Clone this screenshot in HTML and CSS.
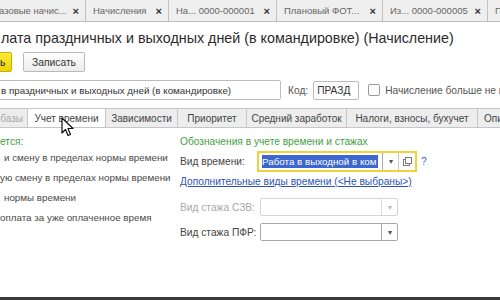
FILE: index.html
```html
<!DOCTYPE html>
<html lang="ru">
<head>
<meta charset="utf-8">
<title>Начисление</title>
<link rel="stylesheet" href="styles.css">
</head>
<body>
<div class="winbar">
  <div class="wtab w1"><span>азовые начис...</span><span class="x">×</span></div>
  <div class="wtab w2"><span>Начисления</span><span class="x">×</span></div>
  <div class="wtab w3"><span>На... 0000-000001</span><span class="x">×</span></div>
  <div class="wtab w4"><span>Плановый ФОТ...</span><span class="x">×</span></div>
  <div class="wtab w5"><span>Из... 0000-000005</span><span class="x">×</span></div>
  <div class="wtab w6"><span>П</span></div>
</div>

<h1 class="title">лата праздничных и выходных дней (в командировке) (Начисление)</h1>

<div class="toolbar">
  <div class="btn btn-yellow">ь</div>
  <div class="btn">Записать</div>
</div>

<div class="namerow">
  <div class="field name">в праздничных и выходных дней (в командировке)</div>
  <span class="lbl code-lbl">Код:</span>
  <div class="field code">ПРАЗД</div>
  <span class="check"></span>
  <span class="lbl">Начисление больше не ис</span>
</div>

<div class="ftabs">
  <div class="ftab t0 faded">базы</div>
  <div class="ftab t1 active">Учет времени</div>
  <div class="ftab t2">Зависимости</div>
  <div class="ftab t3">Приоритет</div>
  <div class="ftab t4">Средний заработок</div>
  <div class="ftab t5">Налоги, взносы, бухучет</div>
  <div class="ftab t6">Опи</div>
</div>

<div class="content">
  <div class="col-left">
    <div class="group">ется:</div>
    <div class="item i1">и смену в пределах нормы времени</div>
    <div class="item">ую смену в пределах нормы времени</div>
    <div class="item i1">нормы времени</div>
    <div class="item">оплата за уже оплаченное время</div>
  </div>
  <div class="col-right">
    <div class="group">Обозначения в учете времени и стажах</div>
    <div class="row r-time">
      <span class="rlbl lbl-time">Вид времени:</span>
      <div class="focus">
        <div class="ftext"><span class="sel">Работа в выходной в ком</span></div>
        <div class="dd">▾</div>
        <div class="open">
          <svg width="9" height="9" viewBox="0 0 9 9"><rect x="0.5" y="2.5" width="6" height="6" fill="#fff" stroke="#777"/><rect x="2.5" y="0.5" width="6" height="6" fill="#fff" stroke="#777"/></svg>
        </div>
      </div>
      <span class="help">?</span>
    </div>
    <div class="link">Дополнительные виды времени (&lt;Не выбраны&gt;)</div>
    <div class="row r-szv">
      <span class="rlbl disabled">Вид стажа СЗВ:</span>
      <div class="sel-field dis"><div class="ftext"></div><div class="dd">▾</div></div>
    </div>
    <div class="row r-pfr">
      <span class="rlbl">Вид стажа ПФР:</span>
      <div class="sel-field"><div class="ftext"></div><div class="dd">▾</div></div>
    </div>
  </div>
</div>

<div class="spacer"></div>
<div class="bottom"></div>

<svg class="cursor" width="13" height="20" viewBox="0 0 13 20"><path d="M1 1 L1 16 L4.5 12.5 L7 18.5 L9.5 17.5 L7 11.5 L12 11.5 Z" fill="#fff" stroke="#111" stroke-width="1.2" stroke-linejoin="round"/></svg>
</body>
</html>
```

FILE: styles.css
```css
* { box-sizing: border-box; }
html, body { margin: 0; padding: 0; }
body {
  width: 500px;
  height: 300px;
  overflow: hidden;
  background: #fff;
  font-family: "Liberation Sans", Arial, sans-serif;
  color: #444;
  display: flex;
  flex-direction: column;
  position: relative;
}

/* window tabs */
.winbar {
  height: 22px;
  flex: none;
  display: flex;
  background: #e6e6e6;
  border-bottom: 1px solid #bdbdbd;
  overflow: hidden;
}
.wtab {
  flex: none;
  display: flex;
  align-items: center;
  justify-content: space-between;
  padding: 0 6px 0 7px;
  font-size: 9.5px;
  color: #666;
  background: #efefef;
  border-right: 1px solid #c2c2c2;
  white-space: nowrap;
  overflow: hidden;
}
.wtab .x { color: #333; font-size: 11px; font-weight: bold; }
.w1 { width: 87px; padding-left: 0; margin-left: -1px; }
.w2 { width: 83px; }
.w3 { width: 108px; }
.w4 { width: 106px; }
.w5 { width: 105px; }
.w6 { width: 30px; border-right: none; }

/* title */
.title {
  margin: 7px 0 0 1px;
  font-size: 14.3px;
  line-height: 18px;
  font-weight: normal;
  color: #2b2b2b;
  white-space: nowrap;
}

/* toolbar */
.toolbar {
  margin-top: 5px;
  height: 20px;
  display: flex;
  gap: 11px;
  flex: none;
}
.btn {
  height: 20px;
  display: flex;
  align-items: center;
  justify-content: center;
  font-size: 10.3px;
  color: #333;
  border: 1px solid #b9b9b9;
  border-radius: 2px;
  background: linear-gradient(#ffffff, #ececec);
  width: 62px;
}
.btn-yellow {
  width: 22px;
  margin-left: -10px;
  padding-left: 9px;
  justify-content: flex-start;
  background: linear-gradient(#fbe93a, #eed400);
  border-color: #c8b000;
  color: #222;
}

/* name row */
.namerow {
  margin-top: 8px;
  height: 20px;
  display: flex;
  align-items: center;
  flex: none;
  font-size: 10.2px;
  white-space: nowrap;
  overflow: hidden;
}
.field {
  height: 20px;
  border: 1px solid #bcbcbc;
  border-radius: 2px;
  display: flex;
  align-items: center;
  color: #333;
  background: #fff;
  flex: none;
}
.name { width: 286px; margin-left: -5px; padding-left: 5px; font-size: 9.8px; }
.lbl { color: #555; }
.code-lbl { margin-left: 7px; margin-right: 5px; }
.code { width: 46px; padding-left: 3px; height: 19px; }
.check {
  width: 12px; height: 12px;
  flex: none;
  border: 1px solid #9a9a9a;
  border-radius: 2px;
  margin: 0 5px 0 9px;
  background: #fff;
}

/* form tabs */
.ftabs {
  margin-top: 8px;
  height: 20px;
  display: flex;
  flex: none;
  border-bottom: 1px solid #c6c6c6;
  font-size: 10px;
  white-space: nowrap;
  overflow: hidden;
}
.ftab {
  flex: none;
  display: flex;
  align-items: center;
  justify-content: center;
  background: #ededed;
  border: 1px solid #c6c6c6;
  border-left: none;
  border-bottom: none;
  color: #444;
}
.ftab.active { background: #fff; height: 20px; }
.faded { color: #a8a8a8; }
.t0 { width: 28px; justify-content: flex-end; padding-right: 4px; }
.t1 { width: 78px; }
.t2 { width: 72px; }
.t3 { width: 69px; }
.t4 { width: 100px; }
.t5 { width: 131px; }
.t6 { width: 22px; justify-content: flex-start; padding-left: 6px; border-right: none; }

/* content */
.content {
  display: grid;
  grid-template-columns: 180px 1fr;
  flex: none;
  font-size: 10.2px;
  white-space: nowrap;
}
.col-left, .col-right { display: flex; flex-direction: column; }
.group {
  margin-top: 7px;
  line-height: 13px;
  color: #3f9f3f;
}
.item { line-height: 20px; color: #4a4a4a; font-size: 9.8px; }
.i1 { padding-left: 4px; }

.row { display: flex; align-items: center; }
.rlbl { width: 80px; flex: none; color: #444; }
.lbl-time { width: 77px; }
.disabled { color: #aaa; }
.r-time { margin-top: 3px; height: 21px; }
.focus {
  width: 160px;
  height: 21px;
  flex: none;
  border: 2px solid #f0d23a;
  display: flex;
  background: #fff;
}
.ftext {
  flex: 1;
  display: flex;
  align-items: center;
  padding-left: 3px;
}
.sel { background: #3d66cf; color: #fff; line-height: 13px; padding-right: 1px; font-size: 9.8px; }
.dd {
  width: 16px;
  flex: none;
  border-left: 1px solid #a9a9a9;
  display: flex;
  align-items: center;
  justify-content: center;
  font-size: 8px;
  color: #555;
}
.open {
  width: 17px;
  flex: none;
  border-left: 1px solid #c9c9c9;
  display: flex;
  align-items: center;
  justify-content: center;
}
.help { margin-left: 4px; color: #3a64c8; }
.link {
  margin-top: 3px;
  line-height: 14px;
  color: #2d55b5;
  text-decoration: underline;
}
.sel-field {
  width: 138px;
  height: 18px;
  flex: none;
  border: 1px solid #a9a9a9;
  border-radius: 2px;
  display: flex;
  background: #fff;
}
.sel-field.dis { border-color: #d4d4d4; }
.sel-field.dis .dd { border-left-color: #dcdcdc; color: #bbb; }
.r-szv { margin-top: 9px; height: 18px; }
.r-pfr { margin-top: 7px; height: 18px; }

.spacer { flex: 1; }
.bottom { height: 3px; flex: none; background: #3a3a3a; }

.cursor { position: absolute; left: 61px; top: 117px; }
```
